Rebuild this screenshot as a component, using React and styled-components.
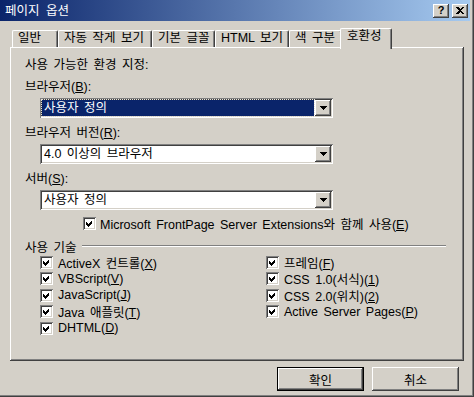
import React from 'react'
import styled, { createGlobalStyle } from 'styled-components'

const GlobalStyle = createGlobalStyle`
  * { box-sizing: border-box; }
  body {
    margin: 0;
    background: #d4d0c8;
    font-family: "Liberation Sans", "Noto Sans CJK KR", sans-serif;
    font-size: 12.5px;
    word-spacing: 2px;
    color: #000;
  }
`

const raised = `
  box-shadow: inset -1px -1px #404040, inset 1px 1px #fff, inset -2px -2px #808080, inset 2px 2px #d4d0c8;
`
const sunken = `
  box-shadow: inset 1px 1px #808080, inset -1px -1px #fff, inset 2px 2px #404040, inset -2px -2px #d4d0c8;
`

const Window = styled.div`
  width: 474px;
  height: 397px;
  background: #d4d0c8;
  display: flex;
  flex-direction: column;
  border-right: 1px solid #404040;
  border-bottom: 1px solid #404040;
  box-shadow: inset -1px -1px #808080;
  padding: 0 3px 2px 0;
`

const TitleBar = styled.div`
  height: 21px;
  flex: 0 0 auto;
  display: flex;
  align-items: center;
  padding: 0 2px 0 5px;
  background: linear-gradient(to right, #0a246a, #a6caf0);
`

const Title = styled.div`
  flex: 1;
  color: #fff;
  font-size: 12.5px;
  line-height: 14px;
  word-spacing: 3px;
`

const CaptionButton = styled.div`
  width: 16px;
  height: 14px;
  margin-left: ${p => p.$gap || 0}px;
  background: #d4d0c8;
  ${raised}
  display: flex;
  align-items: center;
  justify-content: center;
  font-weight: bold;
  font-size: 11px;
  line-height: 11px;
`

const Body = styled.div`
  flex: 1;
  display: flex;
  flex-direction: column;
  padding: 7px 6px 0 10px;
`

const TabStrip = styled.div`
  height: 21px;
  display: flex;
  align-items: flex-end;
  padding-left: 2px;
  margin-bottom: -2px;
  position: relative;
  z-index: 1;
`

const Tab = styled.div`
  width: ${p => p.$w}px;
  height: ${p => (p.$active ? 21 : 17)}px;
  margin: ${p => (p.$active ? '0 -2px 0 -2px' : '0 0 2px 0')};
  padding: ${p => (p.$active ? '1px 0 0 6px' : '1px 0 0 5px')};
  background: #d4d0c8;
  border-top: 1px solid #fff;
  border-left: 1px solid #fff;
  border-right: 1px solid #404040;
  border-radius: 2px 2px 0 0;
  box-shadow: inset -1px 0 #808080;
  line-height: 13px;
  white-space: nowrap;
`

const Panel = styled.div`
  height: 314px;
  background: #d4d0c8;
  ${raised}
  padding: 11px 0 0 15px;
  display: flex;
  flex-direction: column;
`

const Label = styled.div`
  height: 14px;
  line-height: 14px;
  margin-top: ${p => p.$mt || 0}px;
  white-space: nowrap;
`

const Select = styled.div`
  width: 293px;
  height: 20px;
  margin: 4px 0 0 15px;
  background: #fff;
  ${sunken}
  display: flex;
  padding: 2px;
`

const SelectValue = styled.div`
  flex: 1;
  margin-right: 1px;
  padding-left: 2px;
  line-height: 16px;
  background: ${p => (p.$selected ? '#0a246a' : 'transparent')};
  color: ${p => (p.$selected ? '#fff' : '#000')};
  outline: ${p => (p.$selected ? '1px dotted #e8e4dc' : 'none')};
  white-space: nowrap;
`

const ArrowButton = styled.div`
  width: 16px;
  height: 16px;
  background: #d4d0c8;
  ${raised}
  display: flex;
  align-items: center;
  justify-content: center;
`

const CheckRow = styled.div`
  display: flex;
  align-items: center;
  gap: ${p => p.$gap || 5}px;
  height: ${p => p.$h || 16}px;
  margin-left: ${p => p.$ml || 0}px;
  margin-top: ${p => p.$mt || 0}px;
  white-space: nowrap;
`

const Box = styled.div`
  width: 13px;
  height: 13px;
  flex: 0 0 auto;
  background: #fff;
  ${sunken}
`

const GroupHead = styled.div`
  display: flex;
  align-items: center;
  height: 14px;
  margin-top: 9px;
  padding-right: 18px;
`

const GroupLine = styled.div`
  flex: 1;
  margin-left: 6px;
  border-top: 1px solid #808080;
  border-bottom: 1px solid #fff;
`

const CheckGrid = styled.div`
  display: grid;
  grid-template-columns: 226px 1fr;
  grid-template-rows: repeat(5, 16.5px);
  grid-auto-flow: column;
  margin: 1px 0 0 15px;
`

const ButtonRow = styled.div`
  display: flex;
  justify-content: flex-end;
  gap: 8px;
  margin-top: 6px;
  padding-right: 5px;
`

const Button = styled.div`
  width: 87px;
  height: 24px;
  display: flex;
  align-items: center;
  justify-content: center;
  background: #d4d0c8;
  border: ${p => (p.$default ? '1px solid #000' : 'none')};
  ${raised}
  padding-top: 1px;
`

const Check = () => (
  <Box>
    <svg width="13" height="13" viewBox="0 0 13 13" shapeRendering="crispEdges">
      <path d="M3 5 L5 7 L9 3 L9 6 L5 10 L3 8 Z" fill="#000" />
    </svg>
  </Box>
)

const Arrow = () => (
  <svg width="7" height="4" viewBox="0 0 7 4" shapeRendering="crispEdges">
    <path d="M0 0 H7 L3.5 4 Z" fill="#000" />
  </svg>
)

const Dropdown = ({ value, selected }) => (
  <Select>
    <SelectValue $selected={selected}>{value}</SelectValue>
    <ArrowButton><Arrow /></ArrowButton>
  </Select>
)

const tabs = [
  { label: '일반', w: 46 },
  { label: '자동 작게 보기', w: 94 },
  { label: '기본 글꼴', w: 63 },
  { label: 'HTML 보기', w: 74 },
  { label: '색 구분', w: 53 },
  { label: '호환성', w: 52, active: true },
]

const techs = [
  ['ActiveX 컨트롤(', 'X', ')'],
  ['VBScript(', 'V', ')'],
  ['JavaScript(', 'J', ')'],
  ['Java 애플릿(', 'T', ')'],
  ['DHTML(', 'D', ')'],
  ['프레임(', 'F', ')'],
  ['CSS 1.0(서식)(', '1', ')'],
  ['CSS 2.0(위치)(', '2', ')'],
  ['Active Server Pages(', 'P', ')'],
]

export default function App() {
  return (
    <>
      <GlobalStyle />
      <Window>
        <TitleBar>
          <Title>페이지 옵션</Title>
          <CaptionButton>?</CaptionButton>
          <CaptionButton $gap={3}>
            <svg width="8" height="7" viewBox="0 0 8 7" shapeRendering="crispEdges">
              <path d="M0 0 H2 L4 2 L6 0 H8 L5 3.5 L8 7 H6 L4 5 L2 7 H0 L3 3.5 Z" fill="#000" />
            </svg>
          </CaptionButton>
        </TitleBar>
        <Body>
          <TabStrip>
            {tabs.map(t => (
              <Tab key={t.label} $w={t.w} $active={t.active}>{t.label}</Tab>
            ))}
          </TabStrip>
          <Panel>
            <Label>사용 가능한 환경 지정:</Label>
            <Label $mt={8}>브라우저(<u>B</u>):</Label>
            <Dropdown value="사용자 정의" selected />
            <Label $mt={8}>브라우저 버전(<u>R</u>):</Label>
            <Dropdown value="4.0 이상의 브라우저" />
            <Label $mt={8}>서버(<u>S</u>):</Label>
            <Dropdown value="사용자 정의" />
            <CheckRow $ml={58} $mt={6} $h={14} $gap={4}>
              <Check />
              <span>Microsoft FrontPage Server Extensions와 함께 사용(<u>E</u>)</span>
            </CheckRow>
            <GroupHead>
              <span>사용 기술</span>
              <GroupLine />
            </GroupHead>
            <CheckGrid>
              {techs.map(([a, k, b]) => (
                <CheckRow key={a} $h={16.5}>
                  <Check />
                  <span>{a}<u>{k}</u>{b}</span>
                </CheckRow>
              ))}
            </CheckGrid>
          </Panel>
          <ButtonRow>
            <Button $default>확인</Button>
            <Button>취소</Button>
          </ButtonRow>
        </Body>
      </Window>
    </>
  )
}
